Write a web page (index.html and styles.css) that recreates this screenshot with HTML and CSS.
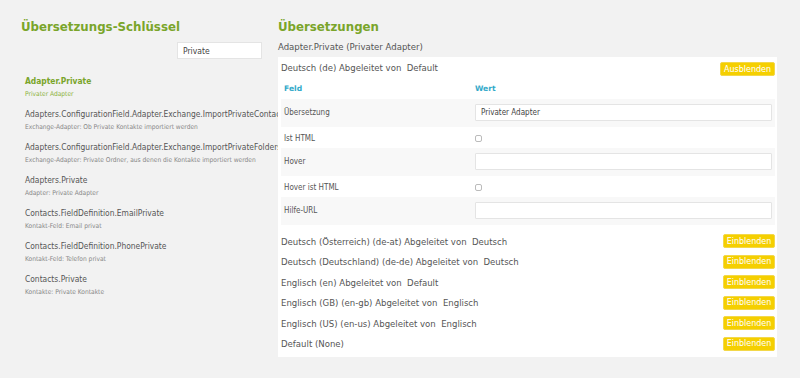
FILE: index.html
```html
<!DOCTYPE html>
<html lang="de">
<head>
    <meta charset="UTF-8">
    <title>Übersetzungen</title>
    <link rel="stylesheet" href="styles.css">
</head>
<body>
    <div class="page">
        <div class="keys">
            <h2 class="title">Übersetzungs-Schlüssel</h2>
            <div class="search-row">
                <input class="search" type="text" value="Private">
            </div>
            <ul class="key-list">
                <li class="key-item active">
                    <div class="key-name">Adapter.Private</div>
                    <div class="key-desc">Privater Adapter</div>
                </li>
                <li class="key-item">
                    <div class="key-name">Adapters.ConfigurationField.Adapter.Exchange.ImportPrivateContacts</div>
                    <div class="key-desc">Exchange-Adapter: Ob Private Kontakte importiert werden</div>
                </li>
                <li class="key-item">
                    <div class="key-name">Adapters.ConfigurationField.Adapter.Exchange.ImportPrivateFolders</div>
                    <div class="key-desc">Exchange-Adapter: Private Ordner, aus denen die Kontakte importiert werden</div>
                </li>
                <li class="key-item">
                    <div class="key-name">Adapters.Private</div>
                    <div class="key-desc">Adapter: Private Adapter</div>
                </li>
                <li class="key-item">
                    <div class="key-name">Contacts.FieldDefinition.EmailPrivate</div>
                    <div class="key-desc">Kontakt-Feld: Email privat</div>
                </li>
                <li class="key-item">
                    <div class="key-name">Contacts.FieldDefinition.PhonePrivate</div>
                    <div class="key-desc">Kontakt-Feld: Telefon privat</div>
                </li>
                <li class="key-item">
                    <div class="key-name">Contacts.Private</div>
                    <div class="key-desc">Kontakte: Private Kontakte</div>
                </li>
            </ul>
        </div>

        <div class="translations">
            <h2 class="title">Übersetzungen</h2>
            <div class="subtitle">Adapter.Private (Privater Adapter)</div>
            <div class="panel">
                <div class="lang open">
                    <div class="lang-head">
                        <span>Deutsch (de) Abgeleitet von&nbsp; Default</span>
                        <button class="btn">Ausblenden</button>
                    </div>
                    <table class="fields">
                        <thead>
                            <tr><th class="col-label">Feld</th><th>Wert</th></tr>
                        </thead>
                        <tbody>
                            <tr class="tall"><td>Übersetzung</td><td><input class="field" type="text" value="Privater Adapter"></td></tr>
                            <tr class="short"><td>Ist HTML</td><td><input class="check" type="checkbox"></td></tr>
                            <tr class="tall"><td>Hover</td><td><input class="field" type="text"></td></tr>
                            <tr class="short"><td>Hover ist HTML</td><td><input class="check" type="checkbox"></td></tr>
                            <tr class="tall"><td>Hilfe-URL</td><td><input class="field" type="text"></td></tr>
                        </tbody>
                    </table>
                </div>
                <div class="lang-head"><span>Deutsch (Österreich) (de-at) Abgeleitet von&nbsp; Deutsch</span><button class="btn">Einblenden</button></div>
                <div class="lang-head"><span>Deutsch (Deutschland) (de-de) Abgeleitet von&nbsp; Deutsch</span><button class="btn">Einblenden</button></div>
                <div class="lang-head"><span>Englisch (en) Abgeleitet von&nbsp; Default</span><button class="btn">Einblenden</button></div>
                <div class="lang-head"><span>Englisch (GB) (en-gb) Abgeleitet von&nbsp; Englisch</span><button class="btn">Einblenden</button></div>
                <div class="lang-head"><span>Englisch (US) (en-us) Abgeleitet von&nbsp; Englisch</span><button class="btn">Einblenden</button></div>
                <div class="lang-head"><span>Default (None)</span><button class="btn">Einblenden</button></div>
            </div>
        </div>
    </div>
</body>
</html>
```

FILE: styles.css
```css
* {
    box-sizing: border-box;
    margin: 0;
    padding: 0;
}
body {
    font-family: "DejaVu Sans Condensed", "DejaVu Sans", sans-serif;
    font-size: 9.5px;
    color: #555;
    background-color: #f2f2f2;
}
.page {
    display: flex;
    padding-top: 18px;
}
.title {
    font-family: "DejaVu Sans", sans-serif;
    font-size: 11.8px;
    font-weight: bold;
    color: #7aa52a;
    height: 18px;
    padding-top: 2px;
}
.keys {
    width: 278px;
    overflow: hidden;
    padding-left: 21px;
}
.search-row {
    display: flex;
    justify-content: flex-end;
    padding-right: 16px;
    margin-top: 6px;
}
.search {
    width: 85px;
    height: 17px;
    border: 1px solid #e4e4e4;
    background: #fff;
    font: inherit;
    font-size: 8.5px;
    color: #444;
    padding: 0 5px;
}
.key-list {
    list-style: none;
    padding-left: 4px;
    margin-top: 17px;
}
.key-item {
    height: 33px;
    white-space: nowrap;
}
.key-name {
    font-size: 8.4px;
    color: #555;
}
.key-desc {
    font-size: 6.6px;
    color: #888;
    margin-top: 4px;
}
.key-item.active .key-name {
    font-weight: bold;
    color: #7aa52a;
}
.key-item.active .key-desc {
    color: #8db33f;
}
.translations {
    width: 499px;
}
.subtitle {
    padding-top: 5px;
    height: 21px;
}
.panel {
    background: #fff;
    padding: 4px 2px 3px 3px;
}
.lang-head {
    display: flex;
    justify-content: space-between;
    align-items: center;
    height: 20.5px;
}
.btn {
    background: #f5cf00;
    border: 1px solid #f3d84a;
    border-radius: 2px;
    color: #fff;
    font-family: "DejaVu Sans", sans-serif;
    font-size: 8px;
    width: 52px;
    height: 14px;
}
.lang.open .btn {
    width: 55px;
}
.lang.open .lang-head {
    height: 14px;
    padding-top: 1px;
    align-items: flex-start;
}
.fields {
    width: 100%;
    border-collapse: collapse;
    margin-top: 2px;
    margin-bottom: 6px;
}
.fields th {
    text-align: left;
    color: #32a9c9;
    font-family: "DejaVu Sans", sans-serif;
    font-size: 7.6px;
    font-weight: bold;
    height: 22px;
    vertical-align: middle;
}
.fields th.col-label {
    width: 194px;
    padding-left: 3px;
}
.fields td {
    padding-left: 3px;
    font-size: 8px;
}
.fields td + td {
    padding-left: 0;
    padding-right: 3px;
}
.fields tr.short td {
    height: 21px;
    vertical-align: middle;
    padding-top: 2px;
}
.fields tr.tall td {
    height: 28px;
    background: #f8f8f8;
    vertical-align: top;
    padding-top: 9px;
}
.fields tr.tall td + td {
    padding-top: 5px;
}
.field {
    display: block;
    width: 100%;
    height: 17px;
    border: 1px solid #e4e4e4;
    border-radius: 1px;
    background: #fff;
    font: inherit;
    color: #444;
    padding: 0 5px;
}
.check {
    appearance: none;
    display: block;
    width: 7px;
    height: 7px;
    border: 1px solid #bbb;
    border-radius: 2px;
    background: #fff;
}
```
